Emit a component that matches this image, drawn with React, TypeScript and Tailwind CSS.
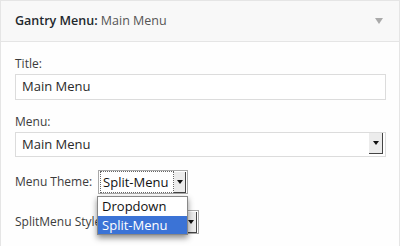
import React from 'react';

function SelectButton({ small }: { small?: boolean }) {
  return (
    <div
      className={`flex items-center justify-center bg-[#ececec] border-r-[1.5px] border-b-[1.5px] border-[#444] ${
        small ? 'w-[12px] h-[21px]' : 'w-[14px] h-[21px]'
      }`}
    >
      <svg width="6" height="4" viewBox="0 0 6 4">
        <path d="M0 0h6L3 4z" fill="#111" />
      </svg>
    </div>
  );
}

export default function App() {
  const label = 'text-[12px] text-[#3c3c3c] leading-[18px]';
  return (
    <div
      className="w-[400px] h-[246px] overflow-hidden bg-white"
      style={{ fontFamily: '"Open Sans", sans-serif' }}
    >
      <div className="border border-[#e5e5e5] h-[260px] bg-[#fefefe]">
        {/* Header */}
        <div className="h-[41px] bg-[#f8f8f8] border-b border-[#e5e5e5] flex items-center justify-between pl-[14px] pr-[16px]">
          <div className="text-[12.5px] text-[#23282d]">
            <span className="font-semibold">Gantry Menu:</span>
            <span className="text-[#555]"> Main Menu</span>
          </div>
          <svg width="8" height="6" viewBox="0 0 8 6">
            <path d="M0 0h8L4 6z" fill="#aaa" />
          </svg>
        </div>

        {/* Body */}
        <div className="pl-[14px] pr-[13px] pt-[13px]">
          <div className={label}>Title:</div>
          <div className="mt-[1px] h-[26px] border border-[#dcdcdc] bg-white flex items-center pl-[6px] text-[13px] text-[#2a2a2a]">
            Main Menu
          </div>

          <div className={`${label} mt-[13px]`}>Menu:</div>
          <div className="mt-[1px] h-[25px] border border-[#dcdcdc] bg-white flex items-start justify-between pl-[6px] pr-[2px] text-[13px] text-[#2a2a2a]">
            <span className="leading-[23px]">Main Menu</span>
            <SelectButton />
          </div>

          <div className="mt-[13px] flex items-center gap-[6px]">
            <span className={label}>Menu Theme:</span>
            <div className="relative">
              <div className="w-[90px] h-[24px] border border-[#a9a9a9] bg-white flex items-center justify-between pl-[1px] pr-[1px]">
                <span className="flex-1 border border-dotted border-[#666] pl-[2px] leading-[20px] text-[13px] text-[#111]">
                  Split-Menu
                </span>
                <SelectButton small />
              </div>
              {/* open dropdown list */}
              <div className="absolute left-[-1px] top-[26px] w-[91px] bg-white border border-[#888] shadow-[0_3px_6px_rgba(0,0,0,0.45)] z-10 text-[13px]">
                <div className="h-[19px] leading-[19px] pl-[4px] text-[#111]">Dropdown</div>
                <div className="h-[18px] leading-[18px] pl-[4px] bg-[#3b73d6] text-white">Split-Menu</div>
              </div>
            </div>
          </div>

          <div className="mt-[16px] flex items-center gap-[4px]">
            <span className={label}>SplitMenu Style:</span>
            <div className="w-[91px] h-[24px] border border-[#a9a9a9] bg-white flex items-center justify-end pr-[1px]">
              <SelectButton small />
            </div>
          </div>
        </div>
      </div>
    </div>
  );
}
